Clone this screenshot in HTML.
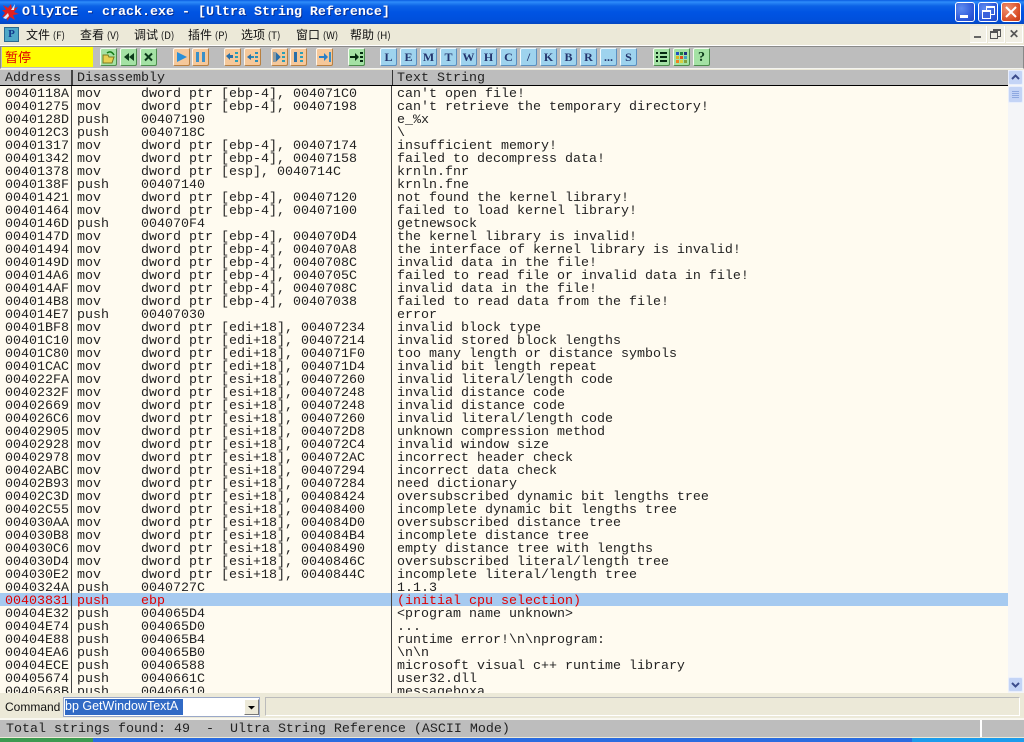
<!DOCTYPE html>
<html><head><meta charset="utf-8">
<style>
html,body{margin:0;padding:0}
body{width:1024px;height:742px;overflow:hidden;position:relative;background:#ECE9D8;font-family:"Liberation Mono",monospace;font-size:13.33px;color:#222}
.a{position:absolute}
#title{left:0;top:0;width:1024px;height:24px;background:linear-gradient(#0A5CE0 0,#2E8CFA 2px,#0C62E6 6px,#0054E3 12px,#0050DC 20px,#0446C0 24px)}
#title .t{position:absolute;left:22px;top:5px;color:#fff;font-weight:bold;line-height:16px;white-space:pre;text-shadow:1px 1px 0 #0a2f90}
.wb{position:absolute;top:2px;width:20px;height:20px;border:1px solid #fff;border-radius:3px;box-sizing:border-box;background:radial-gradient(circle at 30% 30%,#5f8cf0,#2a55d8 70%,#2348c0)}
#menu{left:0;top:24px;width:1024px;height:22px;background:#ECE9D8}
.m{position:absolute;top:3px;font:12px/15px "Noto Sans CJK SC","WenQuanYi Zen Hei",sans-serif;color:#111;white-space:nowrap}
.m small{font-size:10px;letter-spacing:0}
.mb{position:absolute;top:26px;width:17px;height:17px;background:#F1EFE4;border-bottom:1px solid #fff;border-right:1px solid #fff;box-sizing:border-box;color:#555;font:bold 12px/16px "Liberation Sans",sans-serif;text-align:center}
#tb{left:0;top:46px;width:1024px;height:23px;background:#BDBDBD;border-top:1px solid #8a8a8a;border-left:1px solid #8a8a8a;border-right:1px solid #888;border-bottom:1px solid #f4f4f0;box-sizing:border-box}
#tbw{left:0;top:45px;width:1024px;height:1px;background:#fff}
#pause{left:2px;top:47px;width:91px;height:20px;background:#FFFF00;color:#E00000;font:13px/19px "Noto Sans CJK SC",sans-serif;padding-left:3px;box-sizing:border-box}
.b{position:absolute;top:48px;width:17px;height:18px;box-sizing:border-box;border-radius:2px;text-align:center;font:bold 12px/17px "Liberation Serif",serif;border:1px solid #eee}
.g{background:#A4E2A4;border-color:#F4FBF0 #4C8C4C #4C8C4C #F4FBF0;color:#044}
.o{background:#F5C89A;border-color:#FFF5E8 #B98040 #B98040 #FFF5E8;color:#2A7FC8}
.c{background:#9ED3EE;border-color:#F0FAFF #5A8FC0 #5A8FC0 #F0FAFF;color:#23356E}
.b svg{position:absolute;left:0;top:0}
#hdr{left:0;top:70px;width:1008px;height:16px;background:#BDBDBD;border-bottom:1px solid #000;box-sizing:border-box}
#hdr span{position:absolute;top:1px;line-height:15px;color:#222;white-space:pre}
#list{left:0;top:86px;width:1008px;height:607px;background:#FFFBF0;overflow:hidden}
.r{position:absolute;left:0;width:1008px;height:13px;line-height:13px;white-space:pre;color:#222}
.r span{position:absolute;top:1px}
.r span:nth-child(1){left:5px}.r span:nth-child(2){left:77px}.r span:nth-child(3){left:141px}.r span:nth-child(4){left:397px}
.sel{background:#A6CAF0;color:#E00000}
.r.sel span{top:2px}
.v{position:absolute;top:0;width:1px;height:608px;background:#444}
#sb{left:1008px;top:70px;width:16px;height:624px;background:#F4F5F8}
#cmd{left:0;top:693px;width:1024px;height:25px;background:#ECE9D8}
#status{left:0;top:720px;width:1024px;height:17px;background:#BDBDBD;line-height:16px;white-space:pre;color:#222}
</style></head><body>
<div class="a" id="title"><svg class="a" style="left:2px;top:3px" width="18" height="18" viewBox="0 0 18 18"><path d="M1 2l5 3 3-4 1 5 6-2-4 5 5 2-6 1 2 5-5-3-3 4 0-5-5 1 3-4-3-3 4 0z" fill="#E02020"/><path d="M1 15l5-5 1 3-3 3zM13 1l-4 6 3 0z" fill="#dfe6f5"/></svg><div class="t">OllyICE - crack.exe - [Ultra String Reference]</div>
<div class="wb" style="left:955px"><div class="a" style="left:4px;top:12px;width:8px;height:3px;background:#fff"></div></div>
<div class="wb" style="left:978px"><div class="a" style="left:7px;top:3px;width:7px;height:6px;border:1px solid #fff;border-top-width:2px"></div><div class="a" style="left:3px;top:7px;width:7px;height:6px;border:1px solid #fff;border-top-width:2px;background:#3a62dc"></div></div>
<div class="wb" style="left:1001px;background:radial-gradient(circle at 30% 30%,#F09070,#D84C24 70%,#C03A18)"><svg class="a" style="left:2px;top:2px" width="14" height="14"><path d="M2 2L12 12M12 2L2 12" stroke="#fff" stroke-width="2"/></svg></div>
</div>
<div class="a" id="menu">
<div class="a" style="left:4px;top:3px;width:15px;height:15px;background:#4FA8C8;border:1px solid #2A6A90;box-sizing:border-box;color:#123A8C;font:bold 11px/13px 'Liberation Serif',serif;text-align:center">P</div>
<span class="m" style="left:26px">文件 <small>(F)</small></span>
<span class="m" style="left:80px">查看 <small>(V)</small></span>
<span class="m" style="left:134px">调试 <small>(D)</small></span>
<span class="m" style="left:188px">插件 <small>(P)</small></span>
<span class="m" style="left:241px">选项 <small>(T)</small></span>
<span class="m" style="left:296px">窗口 <small>(W)</small></span>
<span class="m" style="left:350px">帮助 <small>(H)</small></span>
</div>
<div class="mb" style="left:970px"><div class="a" style="left:4px;top:10px;width:7px;height:2px;background:#666"></div></div>
<div class="mb" style="left:988px"><div class="a" style="left:5px;top:3px;width:6px;height:5px;border:1px solid #555;border-top-width:2px"></div><div class="a" style="left:2px;top:5px;width:6px;height:5px;border:1px solid #555;border-top-width:2px;background:#F1EFE4"></div></div>
<div class="mb" style="left:1006px">✕</div>
<div class="a" id="tb"></div>
<div class="a" id="tbw"></div>
<div class="a" id="pause">暂停</div>
<div class="b g" style="left:100px"><svg width="15" height="16"><path d="M2 6h5l1 2h5l-2 6H2z" fill="#E8D050" stroke="#7A7A20"/><path d="M6 4q4-3 7 2" stroke="#177A17" stroke-width="1.5" fill="none"/></svg></div>
<div class="b g" style="left:120px"><svg width="15" height="16"><path d="M8 4v8L3 8zM13 4v8L8 8z" fill="#0C3A1A"/></svg></div>
<div class="b g" style="left:140px"><svg width="15" height="16"><path d="M4 4.500l7 7M11 4.500l-7 7" stroke="#0C3A1A" stroke-width="2"/></svg></div>
<div class="b o" style="left:173px"><svg width="15" height="16"><path d="M3 3l10 5-10 5z" fill="#2A8FD8"/></svg></div>
<div class="b o" style="left:192px"><svg width="15" height="16"><path d="M3 3h3v10H3zM9 3h3v10H9z" fill="#3A90C8"/></svg></div>
<div class="b o" style="left:224px"><svg width="15" height="16"><path d="M1 7l4-3v2h3v3H5v2z" fill="#2A6FA8"/><path d="M10 3h3v2h-3zM10 7h3v2h-3zM10 11h3v2h-3z" fill="#2A9FB8"/></svg></div>
<div class="b o" style="left:244px"><svg width="15" height="16"><path d="M2 8l4-3v6z" fill="#2A6FA8"/><path d="M6 7h3v2H6zM10 3h3v2h-3zM10 7h3v2h-3zM10 11h3v2h-3z" fill="#2A8FB8"/></svg></div>
<div class="b o" style="left:271px"><svg width="15" height="16"><path d="M2 3v10M4 4l4 4-4 4z" fill="#2A6FA8" stroke="#2A6FA8"/><path d="M10 3h3v2h-3zM10 7h3v2h-3zM10 11h3v2h-3z" fill="#2A9FB8"/></svg></div>
<div class="b o" style="left:290px"><svg width="15" height="16"><path d="M3 3h3v10H3z" fill="#2A6FA8"/><path d="M9 3h3v2H9zM9 7h3v2H9zM9 11h3v2H9z" fill="#2A9FB8"/></svg></div>
<div class="b o" style="left:316px"><svg width="15" height="16"><path d="M2 7h5V4l4 4-4 4V9H2z" fill="#2A7FC8"/><path d="M12 3h2v10h-2z" fill="#3A8FC8"/></svg></div>
<div class="b g" style="left:348px"><svg width="15" height="16"><path d="M1 7h5V4l4 4-4 4V9H1z" fill="#052A10"/><path d="M11 3h3v2h-3zM11 7h3v2h-3zM11 11h3v2h-3z" fill="#052A10"/></svg></div>
<div class="b c" style="left:380px">L</div><div class="b c" style="left:400px">E</div><div class="b c" style="left:420px">M</div><div class="b c" style="left:440px">T</div><div class="b c" style="left:460px">W</div><div class="b c" style="left:480px">H</div><div class="b c" style="left:500px">C</div><div class="b c" style="left:520px">/</div><div class="b c" style="left:540px">K</div><div class="b c" style="left:560px">B</div><div class="b c" style="left:580px">R</div><div class="b c" style="left:600px">...</div><div class="b c" style="left:620px">S</div>
<div class="b g" style="left:653px"><svg width="15" height="16"><path d="M2 3h2v2H2zM6 3h7v2H6zM2 7h2v2H2zM6 7h7v2H6zM2 11h2v2H2zM6 11h7v2H6z" fill="#052A10"/></svg></div>
<div class="b g" style="left:673px"><svg width="15" height="16"><path d="M2 3h3v3H2z" fill="#2050C0"/><path d="M6 3h3v3H6z" fill="#208040"/><path d="M10 3h3v3h-3z" fill="#203080"/><path d="M2 7h3v3H2z" fill="#E0B020"/><path d="M6 7h3v3H6z" fill="#E05020"/><path d="M10 7h3v3h-3z" fill="#40A0C0"/><path d="M2 11h3v3H2z" fill="#F08020"/><path d="M6 11h3v3H6z" fill="#D8D040"/><path d="M10 11h3v3h-3z" fill="#80A040"/></svg></div>
<div class="b g" style="left:693px;font-size:14px;color:#0C3A1A">?</div>
<div class="a" id="hdr"><span style="left:5px">Address</span><span style="left:77px">Disassembly</span><span style="left:397px">Text String</span>
<div class="a" style="left:71px;top:0;width:2px;height:15px;background:#444"></div><div class="a" style="left:392px;top:0;width:1px;height:15px;background:#333"></div></div>
<div class="a" id="list">
<div class="r" style="top:1px"><span>0040118A</span><span>mov</span><span>dword ptr [ebp-4], 004071C0</span><span>can't open file!</span></div>
<div class="r" style="top:14px"><span>00401275</span><span>mov</span><span>dword ptr [ebp-4], 00407198</span><span>can't retrieve the temporary directory!</span></div>
<div class="r" style="top:27px"><span>0040128D</span><span>push</span><span>00407190</span><span>e_%x</span></div>
<div class="r" style="top:40px"><span>004012C3</span><span>push</span><span>0040718C</span><span>\</span></div>
<div class="r" style="top:53px"><span>00401317</span><span>mov</span><span>dword ptr [ebp-4], 00407174</span><span>insufficient memory!</span></div>
<div class="r" style="top:66px"><span>00401342</span><span>mov</span><span>dword ptr [ebp-4], 00407158</span><span>failed to decompress data!</span></div>
<div class="r" style="top:79px"><span>00401378</span><span>mov</span><span>dword ptr [esp], 0040714C</span><span>krnln.fnr</span></div>
<div class="r" style="top:92px"><span>0040138F</span><span>push</span><span>00407140</span><span>krnln.fne</span></div>
<div class="r" style="top:105px"><span>00401421</span><span>mov</span><span>dword ptr [ebp-4], 00407120</span><span>not found the kernel library!</span></div>
<div class="r" style="top:118px"><span>00401464</span><span>mov</span><span>dword ptr [ebp-4], 00407100</span><span>failed to load kernel library!</span></div>
<div class="r" style="top:131px"><span>0040146D</span><span>push</span><span>004070F4</span><span>getnewsock</span></div>
<div class="r" style="top:144px"><span>0040147D</span><span>mov</span><span>dword ptr [ebp-4], 004070D4</span><span>the kernel library is invalid!</span></div>
<div class="r" style="top:157px"><span>00401494</span><span>mov</span><span>dword ptr [ebp-4], 004070A8</span><span>the interface of kernel library is invalid!</span></div>
<div class="r" style="top:170px"><span>0040149D</span><span>mov</span><span>dword ptr [ebp-4], 0040708C</span><span>invalid data in the file!</span></div>
<div class="r" style="top:183px"><span>004014A6</span><span>mov</span><span>dword ptr [ebp-4], 0040705C</span><span>failed to read file or invalid data in file!</span></div>
<div class="r" style="top:196px"><span>004014AF</span><span>mov</span><span>dword ptr [ebp-4], 0040708C</span><span>invalid data in the file!</span></div>
<div class="r" style="top:209px"><span>004014B8</span><span>mov</span><span>dword ptr [ebp-4], 00407038</span><span>failed to read data from the file!</span></div>
<div class="r" style="top:222px"><span>004014E7</span><span>push</span><span>00407030</span><span>error</span></div>
<div class="r" style="top:235px"><span>00401BF8</span><span>mov</span><span>dword ptr [edi+18], 00407234</span><span>invalid block type</span></div>
<div class="r" style="top:248px"><span>00401C10</span><span>mov</span><span>dword ptr [edi+18], 00407214</span><span>invalid stored block lengths</span></div>
<div class="r" style="top:261px"><span>00401C80</span><span>mov</span><span>dword ptr [edi+18], 004071F0</span><span>too many length or distance symbols</span></div>
<div class="r" style="top:274px"><span>00401CAC</span><span>mov</span><span>dword ptr [edi+18], 004071D4</span><span>invalid bit length repeat</span></div>
<div class="r" style="top:287px"><span>004022FA</span><span>mov</span><span>dword ptr [esi+18], 00407260</span><span>invalid literal/length code</span></div>
<div class="r" style="top:300px"><span>0040232F</span><span>mov</span><span>dword ptr [esi+18], 00407248</span><span>invalid distance code</span></div>
<div class="r" style="top:313px"><span>00402669</span><span>mov</span><span>dword ptr [esi+18], 00407248</span><span>invalid distance code</span></div>
<div class="r" style="top:326px"><span>004026C6</span><span>mov</span><span>dword ptr [esi+18], 00407260</span><span>invalid literal/length code</span></div>
<div class="r" style="top:339px"><span>00402905</span><span>mov</span><span>dword ptr [esi+18], 004072D8</span><span>unknown compression method</span></div>
<div class="r" style="top:352px"><span>00402928</span><span>mov</span><span>dword ptr [esi+18], 004072C4</span><span>invalid window size</span></div>
<div class="r" style="top:365px"><span>00402978</span><span>mov</span><span>dword ptr [esi+18], 004072AC</span><span>incorrect header check</span></div>
<div class="r" style="top:378px"><span>00402ABC</span><span>mov</span><span>dword ptr [esi+18], 00407294</span><span>incorrect data check</span></div>
<div class="r" style="top:391px"><span>00402B93</span><span>mov</span><span>dword ptr [esi+18], 00407284</span><span>need dictionary</span></div>
<div class="r" style="top:404px"><span>00402C3D</span><span>mov</span><span>dword ptr [esi+18], 00408424</span><span>oversubscribed dynamic bit lengths tree</span></div>
<div class="r" style="top:417px"><span>00402C55</span><span>mov</span><span>dword ptr [esi+18], 00408400</span><span>incomplete dynamic bit lengths tree</span></div>
<div class="r" style="top:430px"><span>004030AA</span><span>mov</span><span>dword ptr [esi+18], 004084D0</span><span>oversubscribed distance tree</span></div>
<div class="r" style="top:443px"><span>004030B8</span><span>mov</span><span>dword ptr [esi+18], 004084B4</span><span>incomplete distance tree</span></div>
<div class="r" style="top:456px"><span>004030C6</span><span>mov</span><span>dword ptr [esi+18], 00408490</span><span>empty distance tree with lengths</span></div>
<div class="r" style="top:469px"><span>004030D4</span><span>mov</span><span>dword ptr [esi+18], 0040846C</span><span>oversubscribed literal/length tree</span></div>
<div class="r" style="top:482px"><span>004030E2</span><span>mov</span><span>dword ptr [esi+18], 0040844C</span><span>incomplete literal/length tree</span></div>
<div class="r" style="top:495px"><span>0040324A</span><span>push</span><span>0040727C</span><span>1.1.3</span></div>
<div class="r sel" style="top:507px"><span>00403831</span><span>push</span><span>ebp</span><span>(initial cpu selection)</span></div>
<div class="r" style="top:521px"><span>00404E32</span><span>push</span><span>004065D4</span><span>&lt;program name unknown&gt;</span></div>
<div class="r" style="top:534px"><span>00404E74</span><span>push</span><span>004065D0</span><span>...</span></div>
<div class="r" style="top:547px"><span>00404E88</span><span>push</span><span>004065B4</span><span>runtime error!\n\nprogram:</span></div>
<div class="r" style="top:560px"><span>00404EA6</span><span>push</span><span>004065B0</span><span>\n\n</span></div>
<div class="r" style="top:573px"><span>00404ECE</span><span>push</span><span>00406588</span><span>microsoft visual c++ runtime library</span></div>
<div class="r" style="top:586px"><span>00405674</span><span>push</span><span>0040661C</span><span>user32.dll</span></div>
<div class="r" style="top:599px"><span>0040568B</span><span>push</span><span>00406610</span><span>messageboxa</span></div>
<div class="v" style="left:71px"></div><div class="v" style="left:391px"></div>
</div>
<div class="a" id="sb">
<div class="a" style="left:0;top:0;width:15px;height:15px;background:#C4D4F6;border:1px solid #E8EEFC;box-sizing:border-box;border-radius:2px"><svg width="13" height="13"><path d="M3 8l3.500-3.500L10 8" stroke="#3C4C8C" stroke-width="2" fill="none"/></svg></div>
<div class="a" style="left:0;top:16px;width:15px;height:17px;background:#C4D4F6;border:1px solid #E8EEFC;box-sizing:border-box;border-radius:2px"><svg width="13" height="15"><path d="M3 4.500h7M3 6.500h7M3 8.500h7M3 10.500h7" stroke="#8EA8E0"/></svg></div>
<div class="a" style="left:0;top:607px;width:15px;height:15px;background:#C4D4F6;border:1px solid #E8EEFC;box-sizing:border-box;border-radius:2px"><svg width="13" height="13"><path d="M3 5l3.500 3.500L10 5" stroke="#3C4C8C" stroke-width="2" fill="none"/></svg></div>
</div>
<div class="a" id="cmd">
<span class="a" style="left:5px;top:6px;font:12px/16px 'Liberation Sans',sans-serif;color:#111">Command</span>
<div class="a" style="left:63px;top:4px;width:197px;height:20px;background:#fff;border:1px solid #9AA8C8;box-sizing:border-box"></div>
<div class="a" style="left:65px;top:6px;width:118px;height:16px;background:#316AC5;color:#fff;font:12.5px/15px 'Liberation Sans',sans-serif;white-space:pre;overflow:hidden">bp GetWindowTextA</div>
<div class="a" style="left:244px;top:6px;width:15px;height:16px;background:#ECE9D8;border:1px solid;border-color:#fff #777 #777 #fff;box-sizing:border-box"><svg width="13" height="14"><path d="M3 6h7l-3.500 3.500z" fill="#000"/></svg></div>
<div class="a" style="left:265px;top:4px;width:755px;height:19px;border:1px solid;border-color:#bbb #fff #fff #bbb;box-sizing:border-box"></div>
</div>
<div class="a" style="left:0;top:718px;width:1024px;height:2px;background:#f8f7f0"></div>
<div class="a" id="status"><span class="a" style="left:6px;top:2px">Total strings found: 49  -  Ultra String Reference (ASCII Mode)</span>
<div class="a" style="left:980px;top:0;width:2px;height:17px;background:#fff"></div></div>
<div class="a" style="left:0;top:737px;width:1024px;height:1px;background:#ECE9D8"></div>
<div class="a" style="left:0;top:738px;width:93px;height:4px;background:#3C9A50"></div>
<div class="a" style="left:93px;top:738px;width:819px;height:4px;background:#2A6CE0"></div>
<div class="a" style="left:912px;top:738px;width:112px;height:4px;background:#1C9CEC"></div>
</body></html>
